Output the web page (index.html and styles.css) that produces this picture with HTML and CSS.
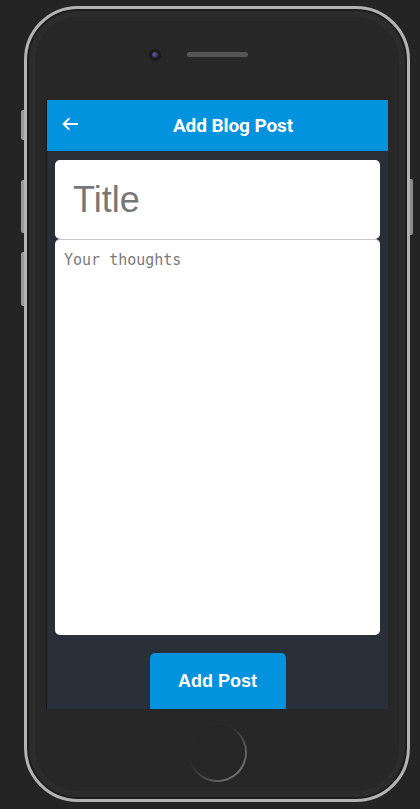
FILE: index.html
```html
<!DOCTYPE html>
<html lang="en">
<head>
<meta charset="utf-8">
<title>Add Blog Post</title>
<link rel="stylesheet" href="styles.css">
</head>
<body>
<div class="stage">
  <div class="phone">
    <span class="side-btn side-btn--mute"></span>
    <span class="side-btn side-btn--vol-up"></span>
    <span class="side-btn side-btn--vol-down"></span>
    <span class="side-btn side-btn--power"></span>
    <div class="phone-top">
      <span class="camera"><span class="lens"></span></span>
      <span class="speaker"></span>
    </div>
    <div class="screen">
      <header class="app-bar">
        <span class="back">
          <svg width="16" height="14" viewBox="0 0 16 14" aria-hidden="true">
            <path d="M16 7H1.6M7.4 1.2L1.6 7l5.8 5.8" fill="none" stroke="#fff" stroke-width="1.9"/>
          </svg>
        </span>
        <h1 class="app-title">Add Blog Post</h1>
      </header>
      <main class="form">
        <input class="title-input" type="text" placeholder="Title">
        <textarea class="thoughts" placeholder="Your thoughts"></textarea>
        <div class="actions">
          <button class="add-btn" type="button">Add Post</button>
        </div>
      </main>
    </div>
    <div class="phone-bottom">
      <span class="home"><span class="home-inner"></span></span>
    </div>
  </div>
</div>
</body>
</html>
```
FILE: styles.css
```css
* { box-sizing: border-box; }

html, body {
  margin: 0;
  background: #242424;
  font-family: Roboto, "Liberation Sans", sans-serif;
}

.stage {
  padding: 6px 0 0 24px;
  height: 809px;
  overflow: hidden;
}

.phone {
  position: relative;
  width: 386px;
  height: 796px;
  border: 3px solid #b3b3b3;
  border-radius: 54px;
  background: #272727;
  box-shadow: inset 0 0 0 2px #1d1d1d, inset 0 0 0 8px #2c2c2c;
  display: flex;
  flex-direction: column;
  padding: 0 19px;
}

.side-btn {
  position: absolute;
  width: 3px;
  background: #9a9a9a;
  border-radius: 2px 0 0 2px;
}
.side-btn--mute { left: -6px; top: 101px; height: 30px; }
.side-btn--vol-up { left: -6px; top: 171px; height: 53px; }
.side-btn--vol-down { left: -6px; top: 243px; height: 54px; }
.side-btn--power { right: -6px; top: 170px; height: 56px; border-radius: 0 2px 2px 0; background: #8c8c8c; }

.phone-top {
  height: 91px;
  flex: none;
  display: flex;
  align-items: flex-start;
  gap: 26px;
  padding: 40px 0 0 103px;
}

.camera {
  width: 12px;
  height: 12px;
  border-radius: 50%;
  background: #1a1a1a;
  display: flex;
  align-items: center;
  justify-content: center;
}
.lens {
  width: 6px;
  height: 6px;
  border-radius: 50%;
  background: radial-gradient(circle at 40% 35%, #6a5fa0 0, #372f5e 60%, #241f3a 100%);
}

.speaker {
  margin-top: 3px;
  width: 61px;
  height: 5px;
  border-radius: 3px;
  background-color: #3a3a3a;
  background-image: radial-gradient(circle, #555 0.8px, transparent 1px);
  background-size: 2px 2px;
  box-shadow: 0 0 0 0.5px #2f2f2f;
}

.screen {
  flex: none;
  height: 609px;
  background: #282f38;
  border-left: 1px solid #15191e;
  display: flex;
  flex-direction: column;
  overflow: hidden;
}

.app-bar {
  flex: none;
  height: 51px;
  background: #0292de;
  display: flex;
  align-items: center;
  margin-left: -1px;
}

.back {
  width: 16px;
  margin-left: 16px;
  display: flex;
  margin-top: -4px;
}

.app-title {
  flex: 1;
  margin: 0;
  text-align: center;
  color: #fff;
  font-family: Roboto, sans-serif;
  font-weight: 700;
  font-size: 19px;
  letter-spacing: -0.1px;
}

.form {
  display: flex;
  flex-direction: column;
  padding: 9px 8px 0 8px;
}

.title-input {
  display: block;
  width: 100%;
  height: 79px;
  border: 0;
  border-radius: 5px;
  padding: 0 18px;
  background: #fff;
  font-family: "Liberation Sans", Arial, sans-serif;
  font-size: 36px;
  color: #333;
  outline: none;
}
.title-input::placeholder { color: #777; }

.thoughts {
  display: block;
  width: 100%;
  height: 396px;
  border: 0;
  border-top: 1px solid #c9c9c9;
  border-radius: 5px;
  padding: 11px 9px;
  background: #fff;
  font-family: "DejaVu Sans Mono", monospace;
  font-size: 15px;
  color: #333;
  resize: none;
  outline: none;
}
.thoughts::placeholder { color: #7a7a7a; }

.actions {
  display: flex;
  justify-content: center;
  padding-top: 18px;
}

.add-btn {
  width: 136px;
  padding: 18px 0 20px;
  border: 0;
  border-radius: 5px;
  background: #0292de;
  color: #fff;
  font-family: "Liberation Sans", Arial, sans-serif;
  font-weight: 700;
  font-size: 18px;
  line-height: 21px;
}

.phone-bottom {
  flex: 1;
  display: flex;
  justify-content: center;
  padding-top: 14px;
}

.home {
  width: 59px;
  height: 59px;
  border-radius: 50%;
  padding: 2px;
  background: linear-gradient(315deg, #8a8a8a 0%, #5a5a5a 30%, #2a2a2a 60%, #262626 100%);
}
.home-inner {
  display: block;
  width: 100%;
  height: 100%;
  border-radius: 50%;
  background: #262626;
}
```
